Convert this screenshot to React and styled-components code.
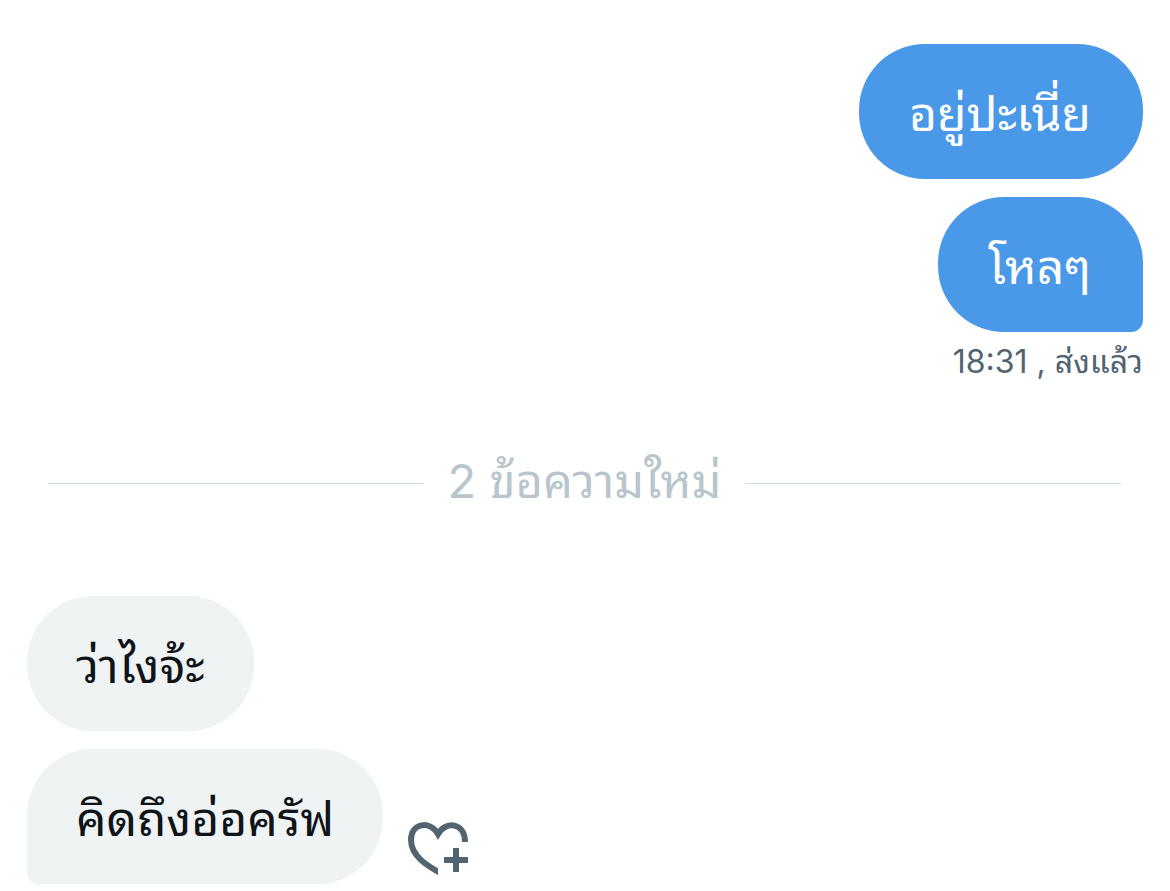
import React from 'react';
import styled, { createGlobalStyle } from 'styled-components';

const Global = createGlobalStyle`
  * { box-sizing: border-box; }
  body { margin: 0; background: #fff; font-family: "Inter", "Noto Sans Thai Looped", Loma, sans-serif; }
`;
const Chat = styled.main`
  display: flex;
  flex-direction: column;
  padding: 44px 27px 7px;
`;
const Group = styled.section`
  display: flex;
  flex-direction: column;
  align-items: ${p => (p.$own ? 'flex-end' : 'flex-start')};
  gap: 18px;
`;
const Bubble = styled.p`
  margin: 0;
  padding: ${p => (p.$own ? '40px 52px 35px 50px' : '40px 49px 35px')};
  font-size: 48px;
  line-height: 60px;
  white-space: nowrap;
  color: ${p => (p.$own ? '#fff' : '#0f1419')};
  background: ${p => (p.$own ? '#4a99e9' : '#eff3f4')};
  border-radius: ${p => (!p.$last ? '66px' : p.$own ? '66px 66px 12px 66px' : '66px 66px 66px 12px')};
`;
const Status = styled.p`
  margin: 8px 0 0;
  text-align: right;
  font-size: 32px;
  line-height: 44px;
  color: #536471;
`;
const Divider = styled.div`
  display: flex;
  align-items: center;
  gap: 24px;
  margin: 68px 22px 82px 21px;
  font-size: 47px;
  line-height: 58px;
  color: #b9c5cc;
  white-space: nowrap;
  &::before, &::after { content: ""; flex: 1; height: 1px; background: #cfd9de; }
`;
const DividerLabel = styled.span`
  padding-bottom: 4px;
`;
const Row = styled.div`
  display: flex;
  align-items: flex-end;
  gap: 22px;
`;
const ReactionButton = styled.button`
  display: flex;
  border: 0;
  padding: 0 0 6px;
  background: none;
  color: #536471;
`;

export default function App() {
  return (
    <>
      <Global />
      <Chat lang="th">
        <Group $own>
          <Bubble $own>อยู่ปะเนี่ย</Bubble>
          <Bubble $own $last>โหลๆ</Bubble>
        </Group>
        <Status>18:31 , ส่งแล้ว</Status>
        <Divider><DividerLabel>2 ข้อความใหม่</DividerLabel></Divider>
        <Group>
          <Bubble>ว่าไงจ้ะ</Bubble>
          <Row>
            <Bubble $last>คิดถึงอ่อครัฟ</Bubble>
            <ReactionButton type="button" aria-label="แสดงความรู้สึก">
              <svg width="66" height="58" viewBox="0 0 66 58" fill="none" stroke="currentColor" strokeWidth="6">
                <clipPath id="heart-cut"><path d="M0 0H66V30H33V58H0Z" /></clipPath>
                <path clipPath="url(#heart-cut)" d="M39 55C22 46 6 36 6 20C6 3 25 0 33 14C41 0 60 3 60 22" />
                <path d="M51 28v24M39 40h24" />
              </svg>
            </ReactionButton>
          </Row>
        </Group>
      </Chat>
    </>
  );
}
